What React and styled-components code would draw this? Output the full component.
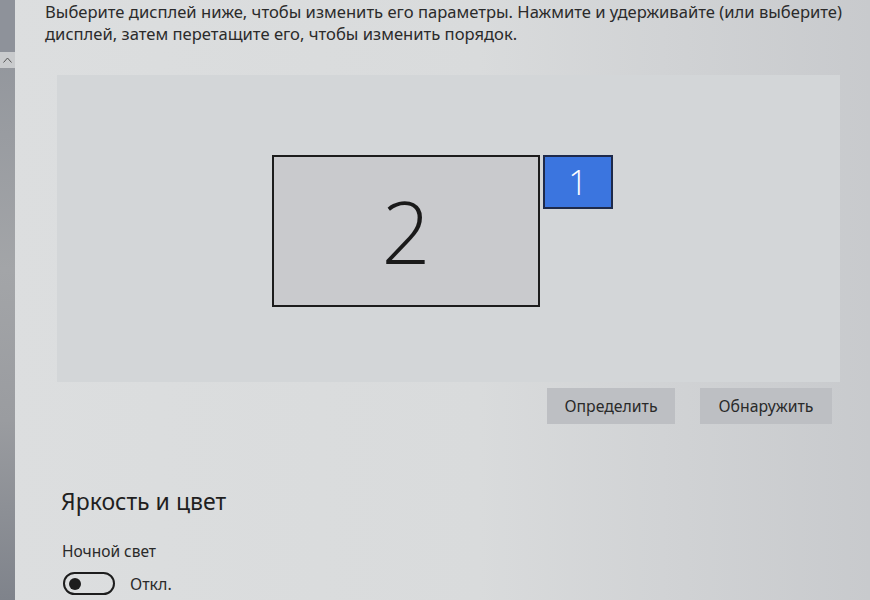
import React from "react";
import styled, { createGlobalStyle } from "styled-components";

const Global = createGlobalStyle`
  html, body { margin: 0; padding: 0; height: 100%; overflow: hidden; }
  body { font-family: "Noto Sans", "Open Sans", sans-serif; color: #262626; }
  #root { height: 100%; }
`;

const Page = styled.div`
  display: flex;
  width: 870px;
  height: 600px;
  overflow: hidden;
  background: linear-gradient(90deg, #dcdedf 0%, #d9dbdc 55%, #c8cacd 100%);
`;

const Rail = styled.div`
  width: 15px;
  flex: none;
  display: flex;
  flex-direction: column;
  background: linear-gradient(180deg, #8f939a 0%, #a3a5a8 45%, #9a9ca0 70%, #7f838b 100%);
`;

const RailTop = styled.div`
  height: 52px;
  background: #8e929a;
`;

const ScrollUp = styled.div`
  height: 16px;
  display: flex;
  align-items: center;
  justify-content: center;
  background: #c9cbcd;
  color: #555;
  svg { display: block; }
`;

const Content = styled.main`
  flex: 1;
  display: flex;
  flex-direction: column;
  padding: 1px 0 0 30px;
`;

const Intro = styled.p`
  margin: 0;
  font-size: 16.6px;
  line-height: 22px;
  color: #2b2b2b;
  white-space: nowrap;
`;

const Arrangement = styled.div`
  position: relative;
  margin: 30px 0 0 12px;
  width: 783px;
  height: 307px;
  background: #d3d6d8;
`;

const Screen = styled.div`
  position: absolute;
  box-sizing: border-box;
  display: flex;
  align-items: center;
  justify-content: center;
  border: 2px solid ${p => (p.$active ? "#1e2a4a" : "#1c1c1c")};
  background: ${p => (p.$active ? "#3b75df" : "#c9cacd")};
  color: ${p => (p.$active ? "#ffffff" : "#1a1a1a")};
  font-family: "Open Sans", "Noto Sans", sans-serif;
  font-weight: 300;
  font-size: ${p => p.$size}px;
  line-height: 1;
`;

const Actions = styled.div`
  display: flex;
  gap: 25px;
  justify-content: flex-end;
  width: 787px;
  margin-top: 6px;
`;

const Button = styled.button`
  width: ${p => p.$w}px;
  height: 36px;
  border: none;
  background: #bdbfc3;
  color: #2a2a2a;
  font-family: "Noto Sans", "Open Sans", sans-serif;
  font-size: 15.8px;
  padding: 0;
`;

const Heading = styled.h2`
  margin: 62px 0 0 16px;
  font-weight: 400;
  font-size: 23px;
  line-height: 30px;
  color: #1f1f1f;
`;

const Label = styled.div`
  margin: 25px 0 0 17px;
  font-size: 15.5px;
  line-height: 20px;
  color: #2a2a2a;
`;

const ToggleRow = styled.div`
  display: flex;
  align-items: center;
  gap: 15px;
  margin: 11px 0 0 18px;
`;

const Toggle = styled.div`
  box-sizing: border-box;
  width: 52px;
  height: 23px;
  border: 2px solid #1d1d1d;
  border-radius: 12px;
  display: flex;
  align-items: center;
  padding-left: 4px;
  &::before {
    content: "";
    width: 12px;
    height: 12px;
    border-radius: 50%;
    background: #1d1d1d;
  }
`;

const State = styled.span`
  font-size: 16px;
  color: #2a2a2a;
`;

export default function App() {
  return (
    <>
      <Global />
      <Page>
        <Rail>
          <RailTop />
          <ScrollUp>
            <svg width="9" height="6" viewBox="0 0 9 6" fill="none" stroke="currentColor" strokeWidth="1">
              <path d="M0.5 5.5 L4.5 1 L8.5 5.5" />
            </svg>
          </ScrollUp>
        </Rail>
        <Content>
          <Intro>
            Выберите дисплей ниже, чтобы изменить его параметры. Нажмите и удерживайте (или выберите)
            <br />
            дисплей, затем перетащите его, чтобы изменить порядок.
          </Intro>
          <Arrangement>
            <Screen $size={86} style={{ left: 215, top: 80, width: 268, height: 152 }}>2</Screen>
            <Screen $active $size={34} style={{ left: 486, top: 80, width: 70, height: 54 }}>1</Screen>
          </Arrangement>
          <Actions>
            <Button $w={128}>Определить</Button>
            <Button $w={132}>Обнаружить</Button>
          </Actions>
          <Heading>Яркость и цвет</Heading>
          <Label>Ночной свет</Label>
          <ToggleRow>
            <Toggle />
            <State>Откл.</State>
          </ToggleRow>
        </Content>
      </Page>
    </>
  );
}
